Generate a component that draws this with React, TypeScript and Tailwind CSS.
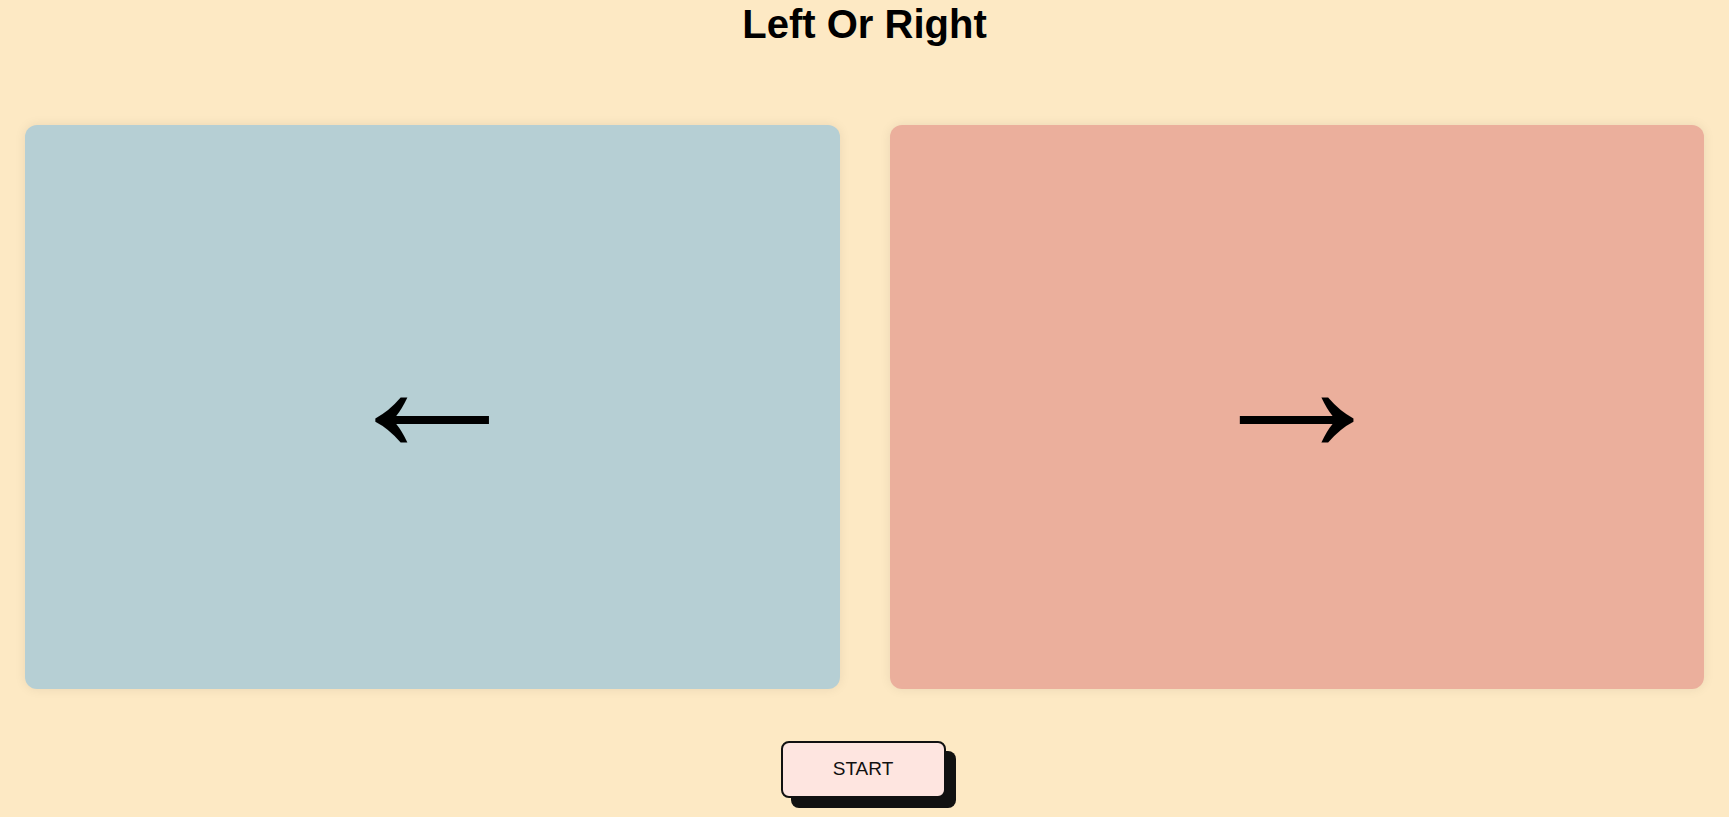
export default function App() {
  return (
    <div className="min-h-screen bg-[#fde9c4] px-[25px] font-['Liberation_Sans',Arial,sans-serif]">
      <h1 className="text-center text-[40px] font-bold leading-[48px] text-black">Left Or Right</h1>

      <div className="mt-[77px] flex gap-[50px]">
        <div className="flex h-[564px] flex-1 items-center justify-center rounded-xl bg-[#b6cfd4] shadow-[0_0_12px_rgba(0,0,0,0.08)]">
          <span className="-mt-[39px] font-['Liberation_Serif',serif] text-[192px] leading-none text-black">←</span>
        </div>
        <div className="flex h-[564px] flex-1 items-center justify-center rounded-xl bg-[#ebaf9c] shadow-[0_0_12px_rgba(0,0,0,0.08)]">
          <span className="-mt-[39px] font-['Liberation_Serif',serif] text-[192px] leading-none text-black">→</span>
        </div>
      </div>

      <div className="mt-[52px] flex justify-center">
        <button className="-ml-[3px] h-[57px] w-[165px] rounded-lg border-2 border-[#111] bg-[#fee5e0] text-[19px] text-[#111] shadow-[10px_10px_0_#111]">
          START
        </button>
      </div>
    </div>
  );
}
